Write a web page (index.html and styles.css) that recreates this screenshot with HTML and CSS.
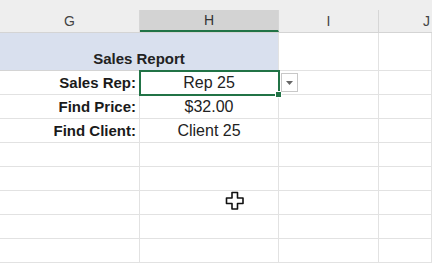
FILE: index.html
```html
<!DOCTYPE html>
<html>
<head>
<meta charset="utf-8">
<link rel="stylesheet" href="styles.css">
</head>
<body>
<div class="app">
  <div class="topstrip"></div>
  <div class="colhdr">
    <div class="ch">G</div>
    <div class="ch ch-active">H</div>
    <div class="ch">I</div>
    <div class="ch ch-last">J</div>
  </div>
  <div class="sheet">
    <div class="cell title">Sales Report</div>
    <div class="cell"></div>
    <div class="cell"></div>

    <div class="cell label">Sales Rep:</div>
    <div class="cell value active">Rep 25<span class="handle"></span><span class="dropdown"><svg width="7" height="4" viewBox="0 0 7 4"><path d="M0 0h7L3.5 4z" fill="#666"/></svg></span></div>
    <div class="cell"></div>
    <div class="cell"></div>

    <div class="cell label">Find Price:</div>
    <div class="cell value">$32.00</div>
    <div class="cell"></div>
    <div class="cell"></div>

    <div class="cell label">Find Client:</div>
    <div class="cell value">Client 25</div>
    <div class="cell"></div>
    <div class="cell"></div>

    <div class="cell"></div><div class="cell"></div><div class="cell"></div><div class="cell"></div>
    <div class="cell"></div><div class="cell"></div><div class="cell"></div><div class="cell"></div>
    <div class="cell"></div><div class="cell"></div><div class="cell"></div><div class="cell"></div>
    <div class="cell"></div><div class="cell"></div><div class="cell"></div><div class="cell"></div>
    <div class="cell"></div><div class="cell"></div><div class="cell"></div><div class="cell"></div>
  </div>
  <svg class="cursor" width="20" height="20" viewBox="0 0 20 20">
    <path d="M7 1.5h5.5v5.5h5.5v5.5h-5.5v5.5h-5.5v-5.5h-5.5v-5.5h5.5z" fill="#fff" stroke="#111" stroke-width="1.6" stroke-linejoin="round"/>
  </svg>
</div>
</body>
</html>
```
FILE: styles.css
```css
html, body {
  margin: 0;
  padding: 0;
  background: #ffffff;
}
.app {
  position: relative;
  width: 432px;
  height: 272px;
  overflow: hidden;
  font-family: "Liberation Sans", Arial, sans-serif;
  color: #222;
}
.topstrip {
  height: 10px;
  background: #eeeeee;
}
.colhdr {
  display: grid;
  grid-template-columns: 140px 139px 100px 53px;
  height: 22px;
  background: #eeeeee;
  border-bottom: 1px solid #d4d4d4;
}
.ch {
  display: flex;
  align-items: center;
  justify-content: center;
  font-size: 14px;
  color: #444;
  border-right: 1px solid #d6d6d6;
}
.ch-active {
  background: #d3d3d3;
  border-bottom: 2px solid #217346;
  color: #333;
}
.ch-last {
  border-right: none;
  justify-content: flex-end;
  padding-right: 2px;
}
.sheet {
  display: grid;
  grid-template-columns: 140px 139px 100px 53px;
  grid-template-rows: 38px repeat(9, 24px);
}
.cell {
  border-right: 1px solid #e2e2e2;
  border-bottom: 1px solid #e2e2e2;
  font-size: 15px;
  line-height: 23px;
  white-space: nowrap;
}
.title {
  grid-column: span 2;
  background: #d9e0ee;
  font-weight: bold;
  text-align: center;
  line-height: 14px;
  display: flex;
  align-items: flex-end;
  justify-content: center;
  padding-bottom: 4px;
  box-sizing: border-box;
  border-right: 1px solid #e2e2e2;
  border-bottom: 1px solid #d4d4d4;
}
.label {
  font-weight: bold;
  text-align: right;
  padding-right: 3px;
  color: #1a1a1a;
}
.value {
  text-align: center;
  font-size: 16px;
  color: #222;
  position: relative;
}
.active {
  outline: 2px solid #217346;
  outline-offset: -1px;
  z-index: 2;
}
.handle {
  position: absolute;
  right: -4px;
  bottom: -4px;
  width: 5px;
  height: 5px;
  background: #217346;
  border: 1px solid #fff;
}
.dropdown {
  position: absolute;
  left: 141px;
  top: 2px;
  width: 17px;
  height: 19px;
  box-sizing: border-box;
  background: #fff;
  border: 1px solid #c8c8c8;
  display: flex;
  align-items: center;
  justify-content: center;
}
.cursor {
  position: absolute;
  left: 225px;
  top: 191px;
}
```
